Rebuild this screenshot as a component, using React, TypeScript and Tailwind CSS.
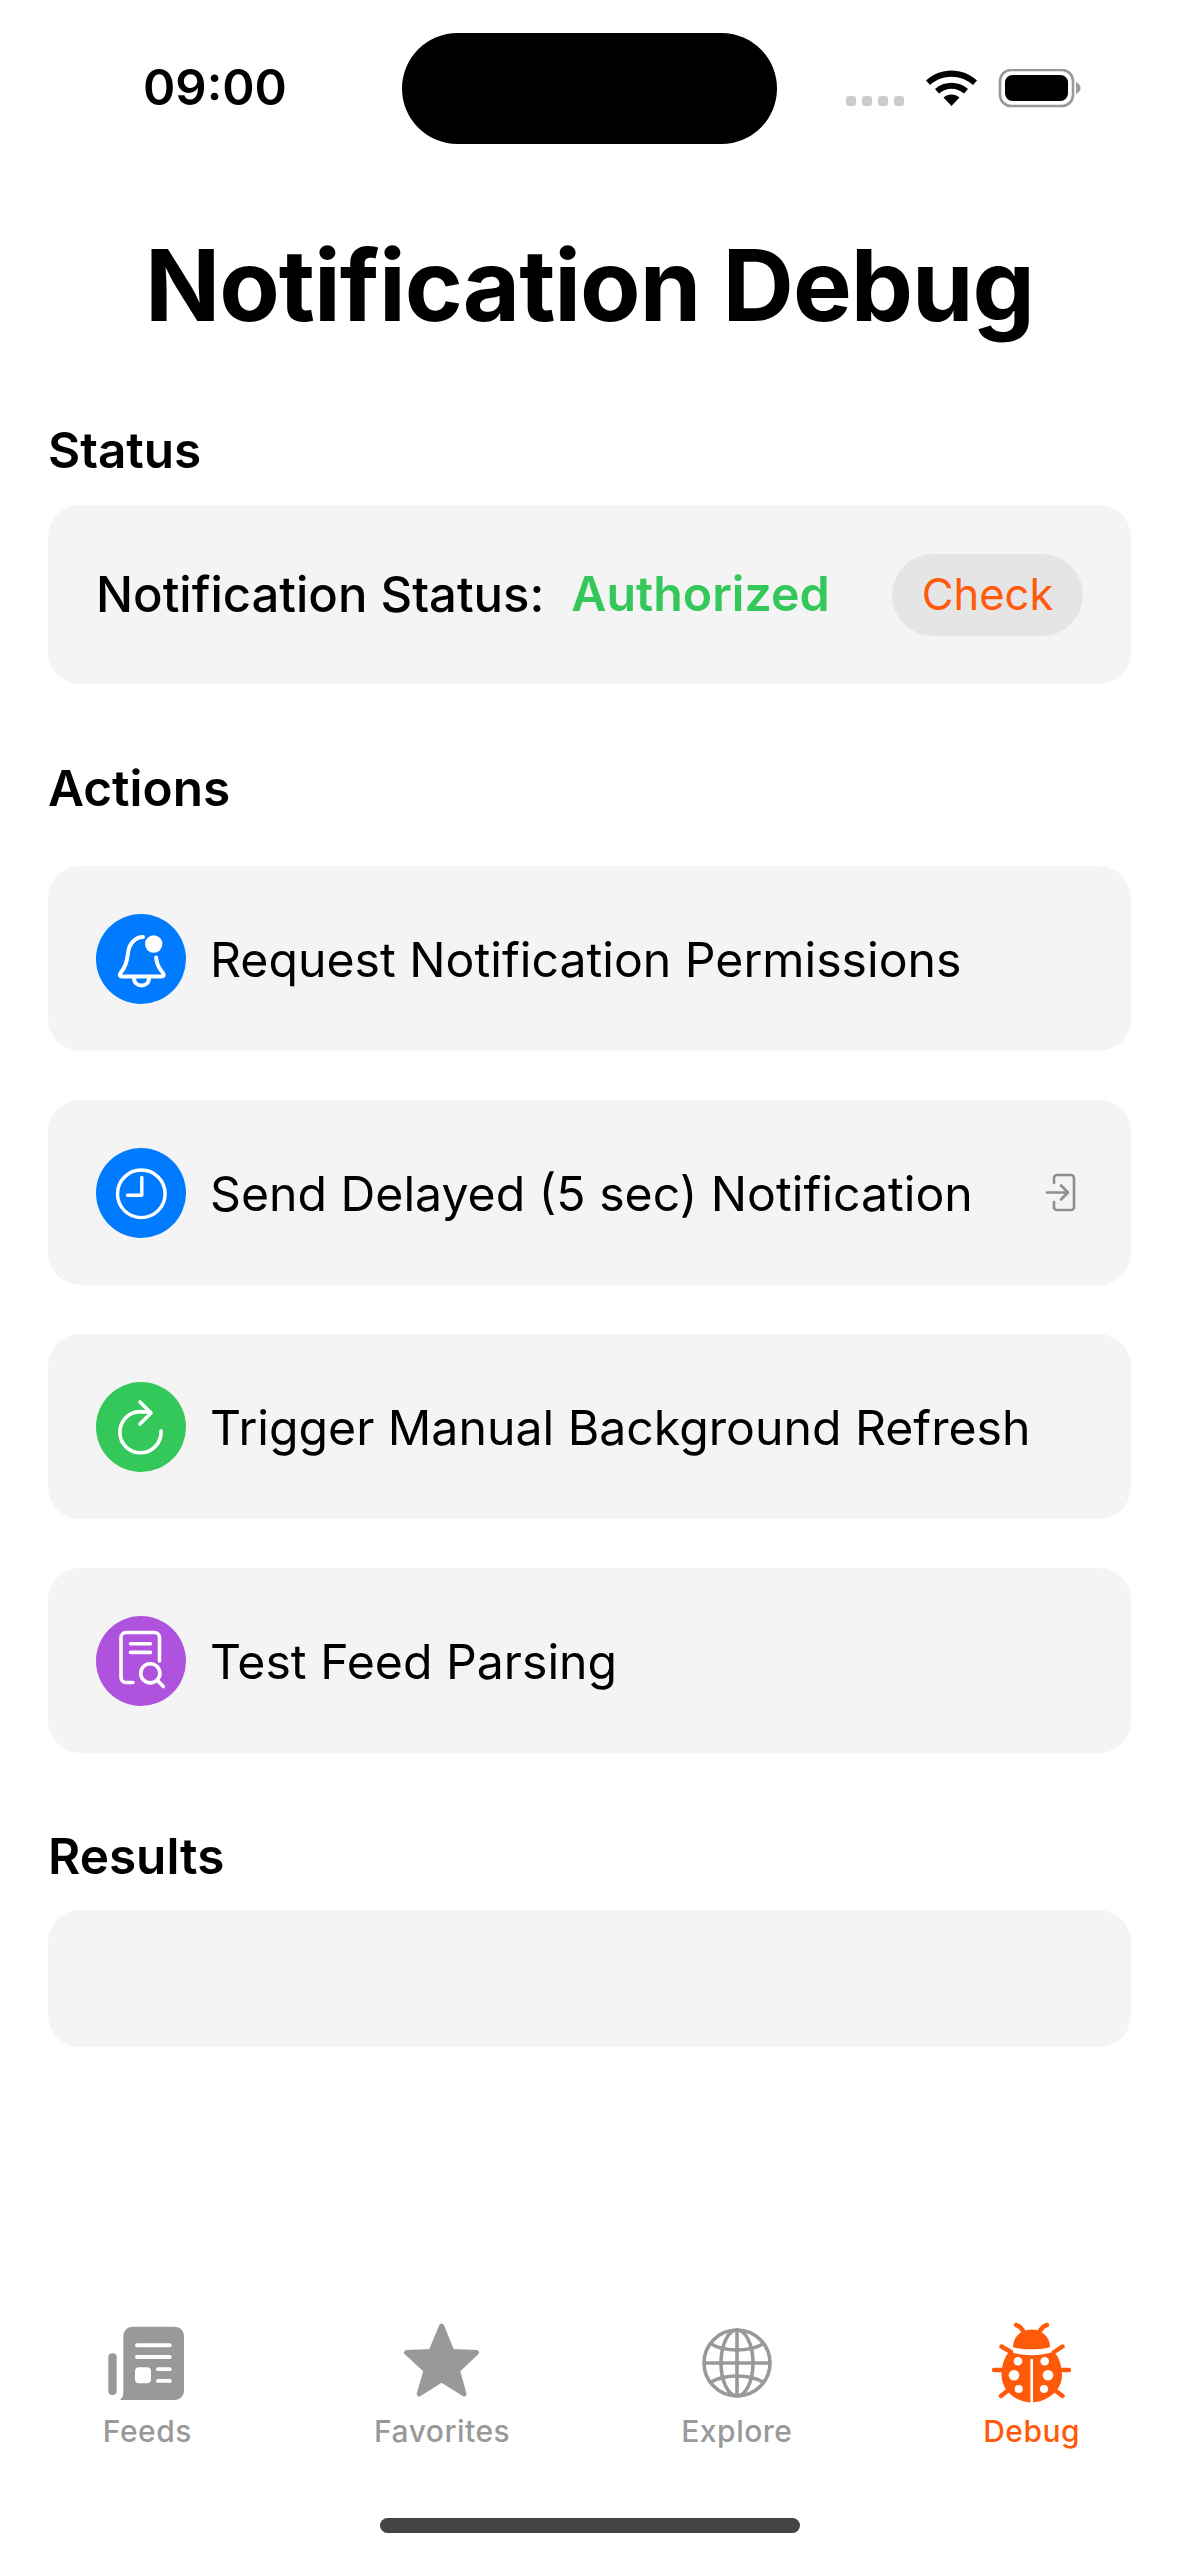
import React from "react";

const BellIcon = () => (
  <svg viewBox="0 0 90 90" className="w-[90px] h-[90px]" fill="none" stroke="#fff" strokeWidth="4" strokeLinecap="round" strokeLinejoin="round">
    <path d="M47 23 C39 23 33 30 32 39 C31 49 29 54 24.5 59 C23 61 24 62.5 26 62.5 H65.5 C67.5 62.5 68.5 61 67 59 C62.5 54 60.5 50 60.2 43.5" />
    <path d="M38 64 C38 74 53 74 53 64" />
    <circle cx="57.7" cy="30" r="8.7" fill="#fff" stroke="none" />
  </svg>
);

const ClockIcon = () => (
  <svg viewBox="0 0 90 90" className="w-[90px] h-[90px]" fill="none" stroke="#fff" strokeWidth="3.4" strokeLinecap="round" strokeLinejoin="round">
    <circle cx="45.3" cy="45.8" r="23.8" />
    <path d="M45.8 29.5 V47.3 H31.5" />
  </svg>
);

const RefreshIcon = () => (
  <svg viewBox="0 0 90 90" className="w-[90px] h-[90px]" fill="none" stroke="#fff" strokeWidth="3.6" strokeLinecap="round" strokeLinejoin="round">
    <path d="M65 49 A20.6 20.6 0 1 1 44 29.6 L54 30" />
    <path d="M44 20 L55 31 L44 42" />
  </svg>
);

const DocSearchIcon = () => (
  <svg viewBox="0 0 90 90" className="w-[90px] h-[90px]" fill="none" stroke="#fff" strokeWidth="3.6" strokeLinecap="round" strokeLinejoin="round">
    <path d="M37 66.5 H30 a5 5 0 0 1 -5 -5 V21.5 a5 5 0 0 1 5 -5 H58.5 a5 5 0 0 1 5 5 V45" />
    <path d="M34.5 27.7 H54.5 M34.5 36.4 H54.5" />
    <circle cx="54.3" cy="57.3" r="9.6" />
    <path d="M61.5 64.5 L67.3 70.5" />
  </svg>
);

const DoorIcon = () => (
  <svg viewBox="0 0 32 42" className="w-[32px] h-[42px]" fill="none" stroke="#8e8e93" strokeWidth="2.6" strokeLinecap="round" strokeLinejoin="round">
    <path d="M9 11 V6 a3 3 0 0 1 3 -3 H26 a3 3 0 0 1 3 3 V35 a3 3 0 0 1 -3 3 H12 a3 3 0 0 1 -3 -3 V30" />
    <path d="M2 20.5 H22.5 M16 13.5 L23 20.5 L16 27.5" />
  </svg>
);

const FeedsIcon = () => (
  <svg viewBox="0 0 96 88" className="w-[96px] h-[88px]" fill="#999999">
    <rect x="9.3" y="33.3" width="8.4" height="41.7" rx="4" />
    <path d="M33 6.7 H76 a9 9 0 0 1 9 9 V71 a9 9 0 0 1 -9 9 H21 C23 78 24.3 76 24.3 73 V15.7 a9 9 0 0 1 8.7 -9 Z" />
    <rect x="36" y="23.3" width="36.7" height="4" rx="2" fill="#fff" />
    <rect x="36" y="35" width="36.7" height="4" rx="2" fill="#fff" />
    <rect x="36" y="47.3" width="16" height="16" rx="4" fill="#fff" />
    <rect x="57" y="47.3" width="15.7" height="3.8" rx="1.9" fill="#fff" />
    <rect x="57" y="59" width="15.7" height="3.8" rx="1.9" fill="#fff" />
  </svg>
);

const StarIcon = () => (
  <svg viewBox="0 0 96 88" className="w-[96px] h-[88px]" fill="#999999" stroke="#999999" strokeWidth="5" strokeLinejoin="round">
    <path d="M47.6 6 L58 31.5 L82.5 32.5 L63.5 50.5 L70 74 L47.6 60 L25.2 74 L32 50.5 L12.5 32.5 L37 31.5 Z" />
  </svg>
);

const GlobeIcon = () => (
  <svg viewBox="0 0 96 88" className="w-[96px] h-[88px]" fill="none" stroke="#999999" strokeWidth="3.6">
    <circle cx="48" cy="43" r="33" />
    <ellipse cx="48" cy="43" rx="16" ry="33" />
    <path d="M48 10 V76 M15 43 H81" />
    <path d="M22 24 C36 32 60 32 74 24" />
    <path d="M22 62 C36 54 60 54 74 62" />
  </svg>
);

const BugIcon = () => (
  <svg viewBox="0 0 96 88" className="w-[96px] h-[88px]" fill="#ff5a0a">
    <g stroke="#ff5a0a" strokeWidth="4.4" strokeLinecap="round" fill="none">
      <path d="M40 13 C38 8 36 6 32 5 M55 13 C57 8 59 6 63 5" />
      <path d="M27 32 L17.5 26.5 M70 32 L78.5 26.5 M10 50 H20 M75 50 H85 M17 76 L25 69.5 M78.5 76 L70 69.5" />
    </g>
    <path d="M29 27 C29 17 37 9.5 47.5 9.5 C58 9.5 66 17 66 27 C60 30 35 30 29 27 Z" />
    <path d="M25.5 31.5 C38 36.5 57 36.5 69.5 31.5 C75.5 37 78 47 78 55 C78 71 63 82 47.6 82.5 C32 82 17.5 71 17.5 55 C17.5 47 20 37 25.5 31.5 Z" />
    <rect x="46.4" y="39" width="2.6" height="46" fill="#fff" />
    <g fill="#fff">
      <circle cx="34" cy="41.3" r="4.3" />
      <circle cx="60.7" cy="41.3" r="4.3" />
      <circle cx="30" cy="55.3" r="5.3" />
      <circle cx="64" cy="55.3" r="5.3" />
      <circle cx="34.7" cy="69" r="4" />
      <circle cx="60" cy="69" r="4" />
    </g>
  </svg>
);

const StatusIcons = () => (
  <svg viewBox="0 0 236 42" className="w-[236px] h-[42px]">
    <g fill="#cccccc">
      <rect x="0" y="27" width="10" height="10" rx="3" />
      <rect x="16" y="27" width="10" height="10" rx="3" />
      <rect x="32" y="27" width="10" height="10" rx="3" />
      <rect x="48" y="27" width="10" height="10" rx="3" />
    </g>
    <path d="M80 11.5 C94 -2 117 -2 131 11.5 L127 16 C115 5 96 5 84 16 Z" />
    <path d="M89 20 C98 11.5 113 11.5 122 20 L118 24.5 C110.5 18 100.5 18 93 24.5 Z" />
    <path d="M97.5 28.5 C102 24.5 109 24.5 113.5 28.5 L105.5 37 Z" />
    <rect x="154" y="1" width="73" height="36" rx="11" fill="#fff" stroke="#999999" strokeWidth="2.6" />
    <rect x="159" y="6" width="63" height="26" rx="7.5" />
    <path d="M230 13 C233 14.5 234.5 16.5 234.5 19 C234.5 21.5 233 23.5 230 25 Z" fill="#999999" />
  </svg>
);

const actions = [
  { label: "Request Notification Permissions", circle: "bg-[#007aff]", icon: <BellIcon /> },
  { label: "Send Delayed (5 sec) Notification", circle: "bg-[#007aff]", icon: <ClockIcon />, trailing: true },
  { label: "Trigger Manual Background Refresh", circle: "bg-[#34c759]", icon: <RefreshIcon /> },
  { label: "Test Feed Parsing", circle: "bg-[#af52de]", icon: <DocSearchIcon /> },
];

const tabs = [
  { label: "Feeds", icon: <FeedsIcon /> },
  { label: "Favorites", icon: <StarIcon /> },
  { label: "Explore", icon: <GlobeIcon /> },
  { label: "Debug", icon: <BugIcon />, active: true },
];

export default function App() {
  return (
    <div className="w-[1179px] h-[2556px] bg-white text-black flex flex-col overflow-hidden font-['Inter',sans-serif]">
      {/* Status bar */}
      <div className="h-[144px] flex items-start">
        <div className="w-[402px] pl-[143px] pt-[58px] text-[49px] leading-[60px] font-semibold">09:00</div>
        <div className="w-[375px] h-[111px] mt-[33px] rounded-[56px] bg-black" />
        <div className="ml-[69px] mt-[69px]">
          <StatusIcons />
        </div>
      </div>

      <h1 className="mt-[81px] text-center text-[98.8px] leading-[120px] font-bold tracking-[-1px]">Notification Debug</h1>

      <div className="px-[48px] mt-[75px]">
        <h2 className="text-[49.5px] leading-[60px] font-semibold">Status</h2>
        <div className="mt-[25px] h-[179px] rounded-[32px] bg-[#f4f4f4] flex items-center pl-[48px] pr-[48px]">
          <span className="text-[49px] font-medium">Notification Status:</span>
          <span className="ml-[27px] text-[48.3px] font-semibold text-[#34c759]">Authorized</span>
          <span className="ml-auto w-[191px] h-[82px] rounded-full bg-[#e5e5e5] flex items-center justify-center text-[43.5px] text-[#ff5a0a]">Check</span>
        </div>

        <h2 className="mt-[74px] text-[49.5px] leading-[60px] font-semibold">Actions</h2>
        <div className="mt-[48px] flex flex-col gap-[49px]">
          {actions.map((action) => (
            <div key={action.label} className="h-[185px] rounded-[32px] bg-[#f4f4f4] flex items-center pl-[48px] pr-[54px]">
              <div className={`w-[90px] h-[90px] rounded-full shrink-0 ${action.circle}`}>{action.icon}</div>
              <span className="ml-[24px] pt-[3px] text-[48.2px] whitespace-nowrap">{action.label}</span>
              {action.trailing && (
                <div className="ml-auto">
                  <DoorIcon />
                </div>
              )}
            </div>
          ))}
        </div>

        <h2 className="mt-[73px] text-[49.5px] leading-[60px] font-semibold">Results</h2>
        <div className="mt-[24px] h-[137px] rounded-[32px] bg-[#f4f4f4]" />
      </div>

      {/* Tab bar */}
      <div className="mt-auto">
        <div className="grid grid-cols-4">
          {tabs.map((tab) => (
            <div key={tab.label} className="flex flex-col items-center">
              {tab.icon}
              <span className={`mt-[3px] text-[30px] leading-[40px] font-medium tracking-[0.5px] ${tab.active ? "text-[#ff5a0a]" : "text-[#999999]"}`}>{tab.label}</span>
            </div>
          ))}
        </div>
        <div className="h-[105px] flex items-start justify-center pt-[67px]">
          <div className="w-[420px] h-[15px] rounded-full bg-[#444444]" />
        </div>
      </div>
    </div>
  );
}
